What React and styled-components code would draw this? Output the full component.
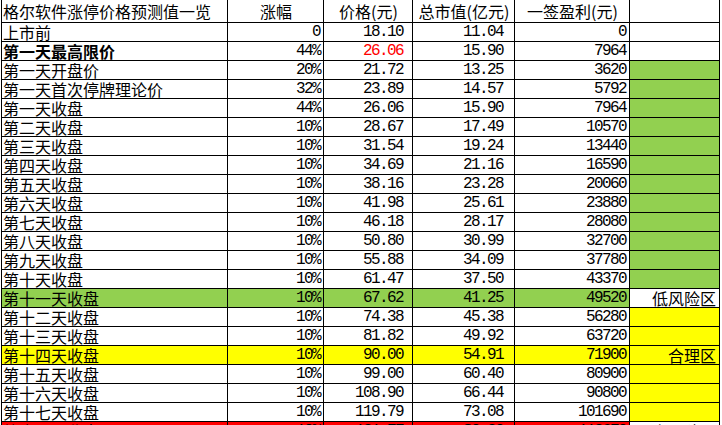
import React from 'react';
import styled, { createGlobalStyle } from 'styled-components';

const GREEN = '#92d050';
const YELLOW = '#ffff00';
const RED = '#ff0000';

const GlobalStyle = createGlobalStyle`
  html, body {
    margin: 0;
    padding: 0;
    background: #fff;
    overflow: hidden;
  }
  * { box-sizing: border-box; }
`;

const Sheet = styled.div`
  width: 722px;
  height: 425px;
  overflow: hidden;
  padding-left: 1px;
  font-family: "Noto Sans CJK SC", "Liberation Sans", sans-serif;
  font-size: 16px;
  color: #000;
`;

const Table = styled.div`
  width: 719px;
  border-left: 1px solid #000;
`;

const Row = styled.div`
  display: grid;
  grid-template-columns: 226px 96px 89px 102px 115px 90px;
  height: ${({ $head }) => ($head ? '23px' : '19px')};
  line-height: ${({ $head }) => ($head ? '22px' : '18px')};
  background: ${({ $fill }) => $fill || 'transparent'};
`;

const Cell = styled.div`
  border-right: 1px solid #000;
  border-bottom: 1px solid #000;
  overflow: hidden;
  white-space: nowrap;
  text-align: ${({ $align }) => $align || 'left'};
  padding: ${({ $pr }) => `0 ${$pr ?? 3}px 0 1px`};
  background: ${({ $bg }) => $bg || 'transparent'};
  font-weight: ${({ $bold }) => ($bold ? 700 : 400)};
`;

const Num = styled(Cell)`
  font-family: "Liberation Mono", "DejaVu Sans Mono", monospace;
  letter-spacing: -1.6px;
  color: ${({ $red }) => ($red ? RED : '#000')};
`;

const rows = [
  { name: '上市前', pct: '0', price: '18.10', cap: '11.04', profit: '0' },
  { name: '第一天最高限价', pct: '44%', price: '26.06', cap: '15.90', profit: '7964', bold: true, redPrice: true },
  { name: '第一天开盘价', pct: '20%', price: '21.72', cap: '13.25', profit: '3620', side: GREEN },
  { name: '第一天首次停牌理论价', pct: '32%', price: '23.89', cap: '14.57', profit: '5792', side: GREEN },
  { name: '第一天收盘', pct: '44%', price: '26.06', cap: '15.90', profit: '7964', side: GREEN },
  { name: '第二天收盘', pct: '10%', price: '28.67', cap: '17.49', profit: '10570', side: GREEN },
  { name: '第三天收盘', pct: '10%', price: '31.54', cap: '19.24', profit: '13440', side: GREEN },
  { name: '第四天收盘', pct: '10%', price: '34.69', cap: '21.16', profit: '16590', side: GREEN },
  { name: '第五天收盘', pct: '10%', price: '38.16', cap: '23.28', profit: '20060', side: GREEN },
  { name: '第六天收盘', pct: '10%', price: '41.98', cap: '25.61', profit: '23880', side: GREEN },
  { name: '第七天收盘', pct: '10%', price: '46.18', cap: '28.17', profit: '28080', side: GREEN },
  { name: '第八天收盘', pct: '10%', price: '50.80', cap: '30.99', profit: '32700', side: GREEN },
  { name: '第九天收盘', pct: '10%', price: '55.88', cap: '34.09', profit: '37780', side: GREEN },
  { name: '第十天收盘', pct: '10%', price: '61.47', cap: '37.50', profit: '43370', side: GREEN },
  { name: '第十一天收盘', pct: '10%', price: '67.62', cap: '41.25', profit: '49520', fill: GREEN, side: '#fff', tag: '低风险区' },
  { name: '第十二天收盘', pct: '10%', price: '74.38', cap: '45.38', profit: '56280', side: YELLOW },
  { name: '第十三天收盘', pct: '10%', price: '81.82', cap: '49.92', profit: '63720', side: YELLOW },
  { name: '第十四天收盘', pct: '10%', price: '90.00', cap: '54.91', profit: '71900', fill: YELLOW, side: YELLOW, tag: '合理区' },
  { name: '第十五天收盘', pct: '10%', price: '99.00', cap: '60.40', profit: '80900', side: YELLOW },
  { name: '第十六天收盘', pct: '10%', price: '108.90', cap: '66.44', profit: '90800', side: YELLOW },
  { name: '第十七天收盘', pct: '10%', price: '119.79', cap: '73.08', profit: '101690', side: YELLOW },
  { name: '第十八天收盘', pct: '10%', price: '131.77', cap: '80.39', profit: '113670', fill: RED, side: '#fff', tag: '高风险区' },
];

export default function App() {
  return (
    <>
      <GlobalStyle />
      <Sheet>
        <Table>
          <Row $head>
            <Cell>格尔软件涨停价格预测值一览</Cell>
            <Cell $align="center" $pr={0}>涨幅</Cell>
            <Cell $align="center" $pr={0}>价格(元)</Cell>
            <Cell $align="center" $pr={0}>总市值(亿元)</Cell>
            <Cell $align="center" $pr={0}>一签盈利(元)</Cell>
            <Cell />
          </Row>
          {rows.map((r) => (
            <Row key={r.name} $fill={r.fill}>
              <Cell $bold={r.bold}>{r.name}</Cell>
              <Num $align="right" $pr={3}>{r.pct}</Num>
              <Num $align="right" $pr={9} $red={r.redPrice}>{r.price}</Num>
              <Num $align="right" $pr={11}>{r.cap}</Num>
              <Num $align="right" $pr={3}>{r.profit}</Num>
              <Cell $align="right" $pr={3} $bg={r.side || '#fff'}>{r.tag}</Cell>
            </Row>
          ))}
        </Table>
      </Sheet>
    </>
  );
}
